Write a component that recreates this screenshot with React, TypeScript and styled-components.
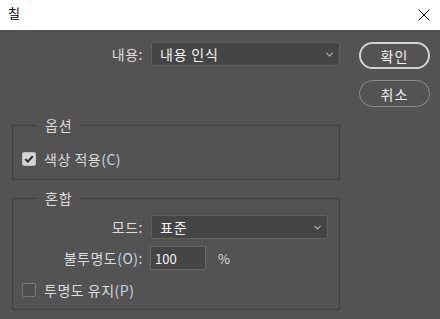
import React from "react";
import styled, { createGlobalStyle } from "styled-components";

const Global = createGlobalStyle`
  html, body { margin: 0; padding: 0; background: #535353; }
  body { font-family: "Noto Sans CJK KR", "Noto Sans", sans-serif; }
  * { box-sizing: border-box; }
`;

const Window = styled.div`
  width: 440px;
  height: 319px;
  display: flex;
  flex-direction: column;
  background: #535353;
  overflow: hidden;
`;

const TitleBar = styled.div`
  height: 30px;
  background: #ffffff;
  display: flex;
  align-items: center;
  justify-content: space-between;
  padding: 0 10px 0 8px;
`;

const Title = styled.span`
  font-size: 13px;
  color: #000;
  line-height: 1;
  margin-top: -6px;
`;

const Body = styled.div`
  flex: 1;
  display: flex;
  padding: 12px 10px 0 12px;
  gap: 19px;
  color: #dcdcdc;
  font-size: 14px;
`;

const LeftCol = styled.div`
  width: 328px;
  display: flex;
  flex-direction: column;
`;

const RightCol = styled.div`
  width: 71px;
  display: flex;
  flex-direction: column;
  gap: 11px;
`;

const Row = styled.div<{ $labelWidth: number; $mb?: number }>`
  display: grid;
  grid-template-columns: ${(p) => p.$labelWidth}px 1fr;
  column-gap: 8px;
  align-items: center;
  margin-bottom: ${(p) => p.$mb ?? 0}px;
`;

const Label = styled.span`
  text-align: right;
  white-space: nowrap;
  letter-spacing: 0.5px;
`;

const Accel = styled.span`
  color: #c9d6e4;
`;

const Select = styled.div<{ $h: number; $w?: number }>`
  height: ${(p) => p.$h}px;
  ${(p) => (p.$w ? `width: ${p.$w}px;` : "")}
  background: #454545;
  border: 1px solid #5f5f5f;
  border-radius: 2px;
  display: flex;
  align-items: center;
  justify-content: space-between;
  padding: 0 6px 0 8px;
  color: #f2f2f2;
  font-size: 14px;
  letter-spacing: 0.8px;
`;

const Chevron = () => (
  <svg width="7" height="5" viewBox="0 0 7 5">
    <path d="M0.5 1 L3.5 4 L6.5 1" stroke="#a8a8a8" strokeWidth="1.1" fill="none" />
  </svg>
);

const Field = styled.div`
  display: flex;
  align-items: center;
  gap: 12px;
`;

const Input = styled.div`
  width: 56px;
  height: 24px;
  margin-left: -1px;
  background: #454545;
  border: 1px solid #686868;
  display: flex;
  align-items: center;
  padding-left: 4px;
  font-size: 13px;
  color: #f4f4f4;
`;

const Unit = styled.span`
  font-size: 13px;
  color: #dcdcdc;
`;

const Group = styled.fieldset<{ $mt: number; $pt: number; $pb: number }>`
  margin: ${(p) => p.$mt}px 0 0 0;
  padding: ${(p) => p.$pt}px 9px ${(p) => p.$pb}px 9px;
  border: 1px solid #424242;
  min-width: 0;
`;

const Legend = styled.legend`
  margin-left: 15px;
  padding: 0 8px;
  height: 16px;
  line-height: 16px;
  font-size: 14px;
  letter-spacing: 0.8px;
  color: #dcdcdc;
`;

const CheckRow = styled.label<{ $mt?: number }>`
  display: flex;
  align-items: center;
  gap: 8px;
  height: 20px;
  margin-top: ${(p) => p.$mt ?? 0}px;
  letter-spacing: 0.5px;
`;

const Box = styled.span<{ $checked: boolean }>`
  width: 14px;
  height: 14px;
  border-radius: 2px;
  display: flex;
  align-items: center;
  justify-content: center;
  background: ${(p) => (p.$checked ? "#d4d4d4" : "#4e4e4e")};
  border: 1px solid ${(p) => (p.$checked ? "#bdbdbd" : "#787878")};
`;

const Button = styled.button<{ $primary?: boolean }>`
  height: 27px;
  width: 71px;
  border-radius: 14px;
  background: #535353;
  border: ${(p) => (p.$primary ? "2px solid #d2d2d2" : "1.5px solid #8c8c8c")};
  color: #f0f0f0;
  font-family: inherit;
  font-size: 14px;
  letter-spacing: 1px;
  padding: 0;
  display: flex;
  align-items: center;
  justify-content: center;
`;

const Close = () => (
  <svg width="12" height="12" viewBox="0 0 12 12">
    <path d="M0.5 0.5 L11.5 11.5 M11.5 0.5 L0.5 11.5" stroke="#111" strokeWidth="1" />
  </svg>
);

const Check = () => (
  <svg width="10" height="8" viewBox="0 0 10 8">
    <path d="M1.2 4 L3.8 6.5 L8.8 1.3" stroke="#2e2e2e" strokeWidth="2" fill="none" />
  </svg>
);

export default function App() {
  return (
    <>
      <Global />
      <Window>
        <TitleBar>
          <Title>칠</Title>
          <Close />
        </TitleBar>
        <Body>
          <LeftCol>
            <Row $labelWidth={131}>
              <Label>내용:</Label>
              <Select $h={24}>
                <span>내용 인식</span>
                <Chevron />
              </Select>
            </Row>
            <Group $mt={51} $pt={16} $pb={10}>
              <Legend>옵션</Legend>
              <CheckRow>
                <Box $checked>
                  <Check />
                </Box>
                <span>
                  색상 적용<Accel>(C)</Accel>
                </span>
              </CheckRow>
            </Group>
            <Group $mt={10} $pt={9} $pb={9}>
              <Legend>혼합</Legend>
              <Row $labelWidth={121} $mb={7}>
                <Label>모드:</Label>
                <Select $h={24} $w={177}>
                  <span>표준</span>
                  <Chevron />
                </Select>
              </Row>
              <Row $labelWidth={121}>
                <Label>
                  불투명도<Accel>(O)</Accel>:
                </Label>
                <Field>
                  <Input>100</Input>
                  <Unit>%</Unit>
                </Field>
              </Row>
              <CheckRow $mt={10}>
                <Box $checked={false} />
                <span>
                  투명도 유지<Accel>(P)</Accel>
                </span>
              </CheckRow>
            </Group>
          </LeftCol>
          <RightCol>
            <Button $primary>확인</Button>
            <Button>취소</Button>
          </RightCol>
        </Body>
      </Window>
    </>
  );
}
